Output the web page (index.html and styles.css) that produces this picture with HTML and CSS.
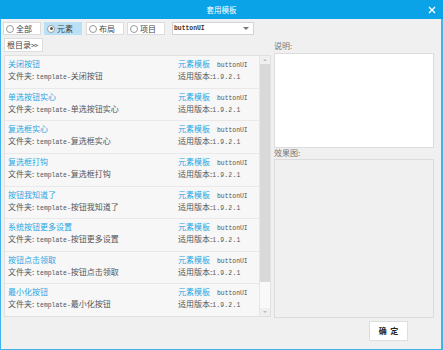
FILE: index.html
```html
<!DOCTYPE html>
<html lang="zh">
<head>
<meta charset="utf-8">
<title>套用模板</title>
<link rel="stylesheet" href="styles.css">
</head>
<body>
<div class="window">
  <div class="titlebar">
    <span class="title">套用模板</span>
    <svg class="close" width="8" height="8" viewBox="0 0 8 8"><path d="M1 1L7 7M7 1L1 7" stroke="#fff" stroke-width="1.4"/></svg>
  </div>
  <div class="toolbar">
    <label class="radio"><span class="dot"></span>全部</label>
    <label class="radio active"><span class="dot on"></span>元素</label>
    <label class="radio r3"><span class="dot"></span>布局</label>
    <label class="radio"><span class="dot"></span>项目</label>
    <div class="select"><span class="mono bold">buttonUI</span><span class="caret"></span></div>
  </div>
  <div class="main">
    <div class="left">
      <div class="rootbtn">根目录<span class="gt">&gt;&gt;</span></div>
      <div class="list">
        <div class="items">
          <div class="item"><div class="row"><span class="name">关闭按钮</span><span class="meta"><span class="tag">元素模板</span><span class="mono">buttonUI</span></span></div><div class="row"><span class="path">文件夹:<span class="mono pre">template-</span>关闭按钮</span><span class="ver-line">适用版本:<span class="mono ver">1.9.2.1</span></span></div></div>
          <div class="item"><div class="row"><span class="name">单选按钮实心</span><span class="meta"><span class="tag">元素模板</span><span class="mono">buttonUI</span></span></div><div class="row"><span class="path">文件夹:<span class="mono pre">template-</span>单选按钮实心</span><span class="ver-line">适用版本:<span class="mono ver">1.9.2.1</span></span></div></div>
          <div class="item"><div class="row"><span class="name">复选框实心</span><span class="meta"><span class="tag">元素模板</span><span class="mono">buttonUI</span></span></div><div class="row"><span class="path">文件夹:<span class="mono pre">template-</span>复选框实心</span><span class="ver-line">适用版本:<span class="mono ver">1.9.2.1</span></span></div></div>
          <div class="item"><div class="row"><span class="name">复选框打钩</span><span class="meta"><span class="tag">元素模板</span><span class="mono">buttonUI</span></span></div><div class="row"><span class="path">文件夹:<span class="mono pre">template-</span>复选框打钩</span><span class="ver-line">适用版本:<span class="mono ver">1.9.2.1</span></span></div></div>
          <div class="item"><div class="row"><span class="name">按钮我知道了</span><span class="meta"><span class="tag">元素模板</span><span class="mono">buttonUI</span></span></div><div class="row"><span class="path">文件夹:<span class="mono pre">template-</span>按钮我知道了</span><span class="ver-line">适用版本:<span class="mono ver">1.9.2.1</span></span></div></div>
          <div class="item"><div class="row"><span class="name">系统按钮更多设置</span><span class="meta"><span class="tag">元素模板</span><span class="mono">buttonUI</span></span></div><div class="row"><span class="path">文件夹:<span class="mono pre">template-</span>按钮更多设置</span><span class="ver-line">适用版本:<span class="mono ver">1.9.2.1</span></span></div></div>
          <div class="item"><div class="row"><span class="name">按钮点击领取</span><span class="meta"><span class="tag">元素模板</span><span class="mono">buttonUI</span></span></div><div class="row"><span class="path">文件夹:<span class="mono pre">template-</span>按钮点击领取</span><span class="ver-line">适用版本:<span class="mono ver">1.9.2.1</span></span></div></div>
          <div class="item"><div class="row"><span class="name">最小化按钮</span><span class="meta"><span class="tag">元素模板</span><span class="mono">buttonUI</span></span></div><div class="row"><span class="path">文件夹:<span class="mono pre">template-</span>最小化按钮</span><span class="ver-line">适用版本:<span class="mono ver">1.9.2.1</span></span></div></div>
        </div>
        <div class="scrollbar">
          <span class="arrow up"></span>
          <span class="thumb"></span>
          <span class="track"></span>
          <span class="arrow down"></span>
        </div>
      </div>
    </div>
    <div class="right">
      <div class="label">说明:</div>
      <div class="desc"></div>
      <div class="label small">效果图:</div>
      <div class="preview"></div>
    </div>
  </div>
  <div class="footer">
    <div class="okbtn">确&nbsp;&nbsp;定</div>
  </div>
</div>
</body>
</html>
```

FILE: styles.css
```css
html, body {
  margin: 0;
  padding: 0;
  background: #f0f0f0;
}
body {
  font-family: "Noto Sans CJK SC", "Noto Sans", sans-serif;
  font-size: 8px;
  color: #555;
}
.window {
  width: 443px;
  height: 350px;
  box-sizing: border-box;
  border: 1px solid #3fb3ea;
  border-top: none;
  border-right-width: 2px;
  background: #f0f0f0;
  display: flex;
  flex-direction: column;
}
.titlebar {
  height: 19px;
  background: #0aa3e8;
  margin: 0 -2px 0 -1px;
  display: flex;
  align-items: center;
  justify-content: center;
  position: relative;
}
.title {
  color: #fff;
  font-size: 7.5px;
  line-height: 19px;
}
.close {
  position: absolute;
  right: 7px;
  top: 6px;
}
.toolbar {
  display: flex;
  align-items: center;
  gap: 3px;
  margin: 3px 0 0 2px;
  height: 13px;
}
.radio {
  width: 38px;
  height: 13px;
  box-sizing: border-box;
  background: #fff;
  border: 1px solid #dcdcdc;
  display: flex;
  align-items: center;
  gap: 2px;
  padding-left: 2px;
  color: #444;
  font-size: 8px;
}
.radio.active {
  background: #b9e0f5;
  border-color: #b9e0f5;
}
.radio.r3 {
  margin-left: 1px;
}
.dot {
  width: 6px;
  height: 6px;
  border-radius: 50%;
  border: 1px solid #9a9a9a;
  background: #fff;
  box-sizing: content-box;
  position: relative;
}
.dot.on::after {
  content: "";
  position: absolute;
  left: 1.5px;
  top: 1.5px;
  width: 3px;
  height: 3px;
  border-radius: 50%;
  background: #555;
}
.select {
  margin-left: 4px;
  width: 82px;
  height: 13px;
  box-sizing: border-box;
  background: #fff;
  border: 1px solid #d4d4d4;
  display: flex;
  align-items: center;
  justify-content: space-between;
  padding: 0 4px 0 1px;
  color: #333;
}
.caret {
  width: 0;
  height: 0;
  border-left: 3px solid transparent;
  border-right: 3px solid transparent;
  border-top: 3px solid #777;
}
.mono {
  font-family: "Liberation Mono", "DejaVu Sans Mono", monospace;
  font-size: 6.4px;
}
.bold {
  font-weight: bold;
}
.main {
  display: grid;
  grid-template-columns: 267px 160px;
  column-gap: 3px;
  margin: 3px 0 0 3px;
}
.left {
  display: flex;
  flex-direction: column;
  gap: 3px;
}
.rootbtn {
  width: 39px;
  height: 14px;
  box-sizing: border-box;
  background: #fff;
  border: 1px solid #dedede;
  color: #444;
  font-size: 8px;
  line-height: 12px;
  padding-left: 2px;
  white-space: nowrap;
}
.gt {
  letter-spacing: -0.6px;
  font-size: 7px;
}
.list {
  height: 262px;
  box-sizing: border-box;
  border: 1px solid #e0e0e0;
  display: flex;
  background: #f3f3f3;
}
.items {
  flex: 1;
  display: grid;
  grid-template-rows: repeat(8, 1fr);
  row-gap: 1px;
  background: #e9e9e9;
}
.item {
  background: #f7f7f7;
  padding: 2px 0 0 3px;
  display: flex;
  flex-direction: column;
}
.row {
  display: flex;
  height: 12px;
  line-height: 12px;
  align-items: baseline;
}
.name {
  color: #2aa6e4;
  width: 170px;
}
.path {
  width: 170px;
  color: #555;
}
.pre {
  margin-left: 2px;
}
.meta {
  display: flex;
  align-items: baseline;
  gap: 7px;
  color: #555;
}
.ver-line {
  color: #555;
}
.tag {
  color: #2aa6e4;
}
.ver {
  letter-spacing: 0.2px;
}
.scrollbar {
  width: 10px;
  display: flex;
  flex-direction: column;
  background: repeating-linear-gradient(0deg, #ececec 0 1px, #f4f4f4 1px 2px);
  border-left: 1px solid #e6e6e6;
}
.arrow {
  height: 8px;
  position: relative;
  background: #efefef;
}
.arrow::after {
  content: "";
  position: absolute;
  left: 3px;
  top: 3px;
  border-left: 2px solid transparent;
  border-right: 2px solid transparent;
}
.arrow.up::after {
  border-bottom: 2px solid #bbb;
}
.arrow.down::after {
  border-top: 2px solid #bbb;
}
.thumb {
  height: 218px;
  background: #d9d9d9;
}
.track {
  flex: 1;
  background: #f9f9f9;
}
.right {
  display: flex;
  flex-direction: column;
}
.label {
  height: 15px;
  line-height: 11px;
  color: #777;
  font-size: 8px;
  padding-top: 2px;
  box-sizing: border-box;
}
.label.small {
  height: 11px;
  line-height: 10px;
  padding-top: 0;
}
.desc {
  height: 95px;
  box-sizing: border-box;
  background: #fff;
  border: 1px solid #dcdcdc;
}
.preview {
  height: 159px;
  box-sizing: border-box;
  background: #f0f0f0;
  border: 1px solid #dcdcdc;
}
.footer {
  display: flex;
  justify-content: flex-end;
  padding: 3px 33px 0 0;
}
.okbtn {
  width: 39px;
  height: 20px;
  box-sizing: border-box;
  background: #fff;
  border: 1px solid #dedede;
  color: #222;
  font-weight: bold;
  font-size: 8px;
  line-height: 18px;
  text-align: center;
}
```
